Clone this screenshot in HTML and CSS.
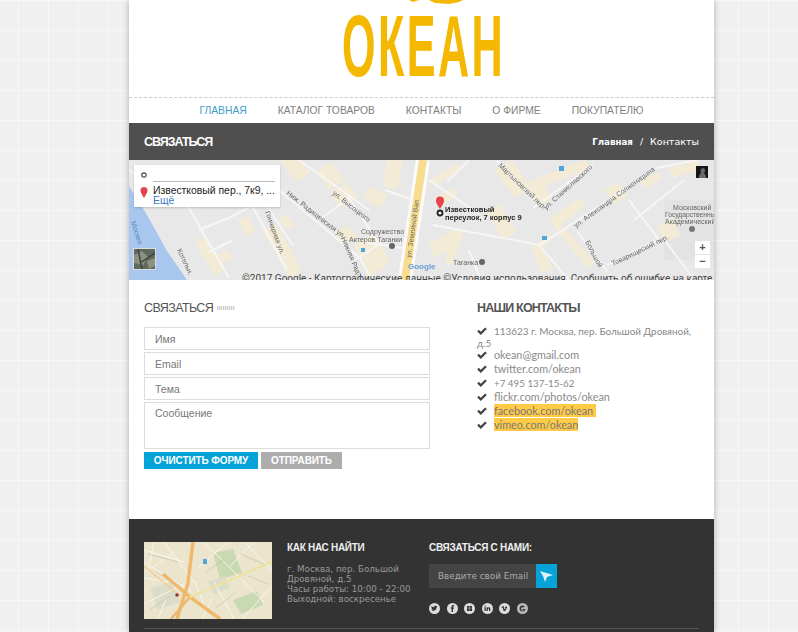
FILE: index.html
```html
<!DOCTYPE html>
<html lang="ru">
<head>
  <meta charset="UTF-8">
  <title>Океан - Связаться</title>
  <link rel="stylesheet" href="styles.css">
</head>
<body>

<div class="page">

  <div class="logo">
    <svg class="logo-swoosh" width="70" height="4" viewBox="0 0 70 4">
      <path d="M0 0h16l4 2 6-2h10l6 3 14 1 10-2 4-2z" fill="#f4b800"/>
    </svg>
    <span class="logo-text">ОКЕАН</span>
  </div>

  <ul class="nav">
    <li class="active">ГЛАВНАЯ</li>
    <li>КАТАЛОГ ТОВАРОВ</li>
    <li>КОНТАКТЫ</li>
    <li>О ФИРМЕ</li>
    <li>ПОКУПАТЕЛЮ</li>
  </ul>

  <div class="title-bar">
    <h1>СВЯЗАТЬСЯ</h1>
    <div class="crumbs"><b>Главная</b> <span class="sep">/</span> Контакты</div>
  </div>

  <div class="map">
    <svg class="map-svg" width="585" height="120" viewBox="0 0 585 120">
      <rect width="585" height="120" fill="#e8e8e8"/>
      <rect x="535" y="40" width="50" height="60" fill="#e3e3e3"/>
      <!-- blocks -->
      <g fill="#f3ebd6">
        <path d="M150 0l22 0 10 12-14 10zM186 12l16-10 14 18-16 10zM200 32l18-8 12 14-18 10z"/>
        <path d="M66 82l10-6 20 34-10 6zM78 100l20-10 6 8-20 10z"/>
        <path d="M133 70l14-6 26 46-12 8zM150 58l8-4 8 12-8 4z"/>
        <path d="M110 60l10-4 6 16-10 4z"/>
        <path d="M225 85l22-12 14 30-20 14zM205 72l14-6 10 12-14 6z"/>
        <path d="M258 0l16 0-6 30-14-4zM240 26l18 8-6 14-18-8z"/>
        <path d="M304 38l20-10 6 8-20 10zM300 20l26-16 6 6-26 16z"/>
        <path d="M365 10l18-10 18 28-14 10zM356 50l14-6 18 28-14 8z"/>
        <path d="M398 22l58-22 6 8-46 18 6 14-14 6zM402 88l18-14 4 4-10 10 10 20-12 6z"/>
        <path d="M420 60l30-22 6 8-24 18 34 38-8 6z"/>
        <path d="M300 84l28-16 6 6-10 30-8 0 2-14-14 8z"/>
        <path d="M540 8l30-8 0 10-26 8zM510 20l20-8 4 6-18 10z"/>
        <path d="M475 30l14-8 10 14-14 8z"/>
        <path d="M528 66l16-8 8 18-16 6z"/>
      </g>
      <!-- river -->
      <path d="M0 26L18 55 38 91 58 120H0z" fill="#a8c6ee"/>
      <!-- roads -->
      <g fill="none" stroke="#f6f6f6" stroke-width="2">
        <path d="M0 10l60 38 40 70"/>
        <path d="M151 31l80 67 12 22"/>
        <path d="M120 40l38 70"/>
        <path d="M100 58l34-18 30 46"/>
        <path d="M70 70l30-12M80 92l24-12"/>
        <path d="M190 60l30-22 30 46-24 16"/>
        <path d="M170 0l70 50"/>
        <path d="M304 65l107 20 117-77 40-8"/>
        <path d="M404 48l60-43M368 1l40 41"/>
        <path d="M448 71l30 40M478 105l56-27 30 40"/>
        <path d="M340 90l12 30M410 85l30 35"/>
        <path d="M300 20l50 34M340 0l-22 22"/>
        <path d="M500 40l30 40M555 20l-50 40"/>
        <path d="M290 42l-34-12M285 90l-50-8"/>
      </g>
      <!-- main road -->
      <path d="M294 0L276 120" stroke="#fbfbfb" stroke-width="14" fill="none"/>
      <path d="M294 0L276 120" stroke="#f8dc8f" stroke-width="8" fill="none"/>
      <!-- labels -->
      <g class="map-label">
        <text transform="translate(157 34) rotate(38)">Ниж. Радищевская ул.</text>
        <text transform="translate(203 34) rotate(38)">ул. Высоцкого</text>
        <text transform="translate(136 52) rotate(70)">Гончарная ул.</text>
        <text x="232" y="74">Содружество</text>
        <text x="220" y="82">Актеров Таганки</text>
        <text transform="translate(212 78) rotate(67)">Нижняя Рад.</text>
        <text transform="translate(282 98) rotate(-82)">ул. Земляной Вал</text>
        <text transform="translate(48 90) rotate(65)">Котельн.</text>
        <text transform="translate(2 62) rotate(72)" class="map-water">Москва</text>
        <text x="324" y="105">Таганка</text>
        <text transform="translate(369 6) rotate(44)">Мартыновский пер.</text>
        <text transform="translate(417 50) rotate(-42)">ул. Станиславского</text>
        <text transform="translate(447 68) rotate(-36)">ул. Александра Солженицына</text>
        <text transform="translate(456 82) rotate(62)">Большой</text>
        <text transform="translate(484 106) rotate(-26)">Товарищеский пер.</text>
        <text x="544" y="50">Московский</text>
        <text x="536" y="57" class="map-tight">Государственны</text>
        <text x="536" y="64">Академический</text>
      </g>
      <!-- small map marks -->
      <rect x="430" y="6" width="5" height="5" fill="#4ea6dc"/>
      <rect x="232" y="88" width="4" height="4" fill="#4ea6dc"/>
      <rect x="413" y="76" width="5" height="4" fill="#4ea6dc"/>
      <circle cx="263" cy="86" r="3" fill="#666"/>
      <circle cx="353" cy="102" r="3" fill="#666"/>
      <circle cx="563" cy="69" r="3" fill="#777"/>
      <text x="279" y="109" class="map-google">Google</text>
      <!-- marker -->
      <circle cx="311" cy="53" r="3.4" fill="#222"/>
      <circle cx="311" cy="53" r="1.6" fill="#eee"/>
      <path d="M311 49c-3-5-4-6-4-8.500a4 4 0 0 1 8 0c0 2.500-1 3.500-4 8.500z" fill="#e5444b"/>
      <text class="map-place" x="316" y="52">Известковый</text>
      <text class="map-place" x="316" y="60">переулок, 7 корпус 9</text>
    </svg>

    <div class="map-card">
      <svg class="card-icons" width="10" height="28" viewBox="0 0 10 28">
        <circle cx="5" cy="5" r="2.2" fill="#fff" stroke="#444" stroke-width="1.2"/>
        <path d="M5 28c-2.600-4.600-3.500-5.600-3.500-7.500a3.500 3.500 0 0 1 7 0c0 1.900-.9 2.900-3.500 7.500z" fill="#e5444b"/>
      </svg>
      <div class="card-body">
        <div class="card-line"></div>
        <div class="card-addr">Известковый пер., 7к9, ...</div>
        <div class="card-more">Ещё</div>
      </div>
    </div>

    <svg class="map-sat" width="21" height="20" viewBox="0 0 21 20">
      <rect width="21" height="20" fill="#5f6a5c"/>
      <path d="M0 6l8-4 6 6-5 8-9-2zM13 12l8-3v8l-6 3z" fill="#8b9181"/>
      <path d="M4 0l4 20M21 4L6 14" stroke="#3d463d" stroke-width="1.500"/>
    </svg>
    <svg class="map-person" width="12" height="12" viewBox="0 0 12 12">
      <rect width="12" height="12" fill="#151515"/>
      <path d="M3 12c0-3 1-4 2-5-1-2 0-5 2-5s3 3 1 5c1 1 2 2 2 5z" fill="#6a6a6a"/>
    </svg>
    <div class="zoom-ctl">
      <span>+</span>
      <span class="zoom-minus">−</span>
    </div>
    <div class="map-attr">©2017 Google - Картографические данные ©Условия использования&nbsp; Сообщить об ошибке на карте</div>
  </div>

  <div class="contact">
    <div class="contact-form">
      <h2>СВЯЗАТЬСЯ <span class="head-dots"></span></h2>
      <input class="field" type="text" placeholder="Имя">
      <input class="field" type="text" placeholder="Email">
      <input class="field" type="text" placeholder="Тема">
      <textarea class="field field-msg" placeholder="Сообщение"></textarea>
      <div class="form-btns">
        <button class="btn btn-blue" type="reset">ОЧИСТИТЬ ФОРМУ</button>
        <button class="btn btn-grey" type="submit">ОТПРАВИТЬ</button>
      </div>
    </div>

    <div class="contact-info">
      <h2>НАШИ КОНТАКТЫ</h2>
      <ul class="contact-list">
        <li class="long"><svg class="check" viewBox="0 0 12 10"><path d="M0 5.500l2-2 2.500 2.500L10 .5l2 2-7.500 7.500z"/></svg>113623 г. Москва, пер. Большой Дровяной, д.5</li>
        <li><svg class="check" viewBox="0 0 12 10"><path d="M0 5.500l2-2 2.500 2.500L10 .5l2 2-7.500 7.500z"/></svg>okean@gmail.com</li>
        <li><svg class="check" viewBox="0 0 12 10"><path d="M0 5.500l2-2 2.500 2.500L10 .5l2 2-7.500 7.500z"/></svg>twitter.com/okean</li>
        <li class="phone"><svg class="check" viewBox="0 0 12 10"><path d="M0 5.500l2-2 2.500 2.500L10 .5l2 2-7.500 7.500z"/></svg>+7 495 137-15-62</li>
        <li><svg class="check" viewBox="0 0 12 10"><path d="M0 5.500l2-2 2.500 2.500L10 .5l2 2-7.500 7.500z"/></svg>flickr.com/photos/okean</li>
        <li><svg class="check" viewBox="0 0 12 10"><path d="M0 5.500l2-2 2.500 2.500L10 .5l2 2-7.500 7.500z"/></svg><span class="hl">facebook.com/okean&nbsp;</span></li>
        <li><svg class="check" viewBox="0 0 12 10"><path d="M0 5.500l2-2 2.500 2.500L10 .5l2 2-7.500 7.500z"/></svg><span class="hl">vimeo.com/okean</span></li>
      </ul>
    </div>
  </div>

  <div class="footer">
    <div class="footer-cols">
      <svg class="footer-map" width="128" height="77" viewBox="0 0 128 77">
        <rect width="128" height="77" fill="#ebe5ce"/>
        <path d="M69 11l20-4 9 24-22 6zM89 58l24-9 6 14-22 9z" fill="#c9d9b2"/>
        <path d="M6 46l22-6 8 20-22 8zM64 40l16-6 6 12-16 6z" fill="#dcdccb"/>
        <g fill="none" stroke="#f8f6ec" stroke-width="1">
          <path d="M0 20l48 30M0 62l40-20M60 0l60 60M60 62l-10-24M20 0l30 40M90 77L70 40M0 8l40 12"/>
          <path d="M10 0l-6 30M30 10l-22 16M84 0l-30 26M100 0l28 28M128 44l-30 33M110 0l-24 24M0 36l24 4M58 77l10-20M14 77l8-20"/>
        </g>
        <g fill="none" stroke="#b9b5a3" stroke-width=".5">
          <path d="M4 12l30 8M12 30l24 14M62 30l20-14M96 12l24 10M72 66l20-16M104 34l20 8M6 68l20-14"/>
        </g>
        <g fill="none" stroke="#efb96c" stroke-width="3.500">
          <path d="M49 0l-5 41-11 36"/>
          <path d="M19 32l27 23 30 22"/>
        </g>
        <path d="M128 20L46 55" fill="none" stroke="#efe39f" stroke-width="2"/>
        <path d="M45 56l-18 21" fill="none" stroke="#efb96c" stroke-width="2.500"/>
        <path d="M0 24l36 30" fill="none" stroke="#efcf95" stroke-width="1.500"/>
        <path d="M59 17h4v5h-4z" fill="#4ea6dc"/>
        <circle cx="33" cy="53" r="1.800" fill="#8a3a30"/>
      </svg>

      <div class="footer-find">
        <h3>КАК НАС НАЙТИ</h3>
        <p>г. Москва, пер. Большой<br>Дровяной, д.5<br>Часы работы: 10:00 - 22:00<br>Выходной: воскресенье</p>
      </div>

      <div class="footer-sub">
        <h3>СВЯЗАТЬСЯ С НАМИ:</h3>
        <div class="sub-form">
          <input class="sub-input" type="text" placeholder="Введите свой Email">
          <button class="sub-btn" type="button">
            <svg width="13" height="11" viewBox="0 0 13 11"><path d="M0 0l13 4-6 2-2 5-2-6z" fill="#dff3fb"/></svg>
          </button>
        </div>
        <div class="socials">
          <span class="social"><svg viewBox="0 0 11 11"><path d="M8.500 3.300c-.3.100-.5.200-.8.200.3-.2.500-.4.600-.7-.3.100-.6.300-.9.300a1.300 1.300 0 0 0-2.200 1.200 3.700 3.700 0 0 1-2.700-1.300c-.3.600-.2 1.300.4 1.700-.2 0-.4-.1-.6-.2 0 .6.500 1.200 1 1.300h-.6c.2.500.6.900 1.200.9a2.700 2.700 0 0 1-1.900.5c2.500 1.500 5.800 0 5.700-3.200.3-.2.600-.4.800-.7z"/></svg></span>
          <span class="social"><svg viewBox="0 0 11 11"><path d="M4.600 9V5.800H3.700V4.600h.9v-.9C4.600 2.700 5.200 2 6.200 2h.9v1.200h-.6c-.4 0-.5.200-.5.500v.9h1.100l-.2 1.200h-.9V9z"/></svg></span>
          <span class="social"><svg viewBox="0 0 11 11"><path d="M3 3h2.300v5H3zM5.700 3H8v5H5.700z"/><circle cx="4.200" cy="5" r=".6" fill="#ddd"/><circle cx="6.800" cy="5" r=".6" fill="#ddd"/></svg></span>
          <span class="social"><svg viewBox="0 0 11 11"><path d="M2.500 4.300h1.300V8H2.500zM3.150 2.400a.7.700 0 1 1 0 1.400.7.700 0 0 1 0-1.400zM4.600 4.300h1.200v.5c.5-.8 2.500-1 2.500 1V8H7V6c0-.8-1.100-.8-1.100 0v2H4.600z"/></svg></span>
          <span class="social"><svg viewBox="0 0 11 11"><path d="M2.300 4.300c1.500-1.300 2-1.700 2.500-.6l.6 2.300c.3.800.6.300 1.200-.7.300-.7-.4-.8-.9-.4.500-1.700 2.900-2 2.300-.2C7.200 7 5.400 8.700 4.800 8 4 7 4.100 5 3.400 4.300l-.8.400z"/></svg></span>
          <span class="social social-last"><svg viewBox="0 0 11 11"><path d="M7.800 3.600A3 3 0 1 0 8.500 6H5.600v1h1.700a1.800 1.800 0 1 1-.3-2.600z"/></svg></span>
        </div>
      </div>
    </div>
    <div class="footer-line"></div>
  </div>

</div>

</body>
</html>
```

FILE: styles.css
```css
html, body {
  margin: 0;
  height: 632px;
  overflow: hidden;
}

body {
  font-family: 'Liberation Sans', Arial, sans-serif;
  background-color: #f0f0f0;
  background-image:
    linear-gradient(90deg, #f7f7f7 1px, transparent 1px),
    linear-gradient(#f7f7f7 1px, transparent 1px);
  background-size: 30px 30px;
  background-position: 18px 0;
}

.page {
  width: 585px;
  height: 632px;
  margin-left: 129px;
  background: white;
  box-shadow: 0 0 6px rgba(0,0,0,0.28);
  overflow: hidden;
}

/* logo */
.logo {
  height: 97px;
  position: relative;
  overflow: hidden;
}

.logo-swoosh {
  position: absolute;
  left: 264px;
  top: 0;
}

.logo-text {
  position: absolute;
  left: 213px;
  top: 4px;
  font-size: 88px;
  line-height: 84px;
  font-weight: bold;
  letter-spacing: 5px;
  color: #f4b800;
  white-space: nowrap;
  transform: scaleX(0.49);
  transform-origin: left top;
}

/* nav */
.nav {
  list-style: none;
  margin: 0;
  padding: 0 0 1px;
  height: 26px;
  border-top: 1px dashed #ccc;
  display: flex;
  justify-content: center;
  align-items: center;
  gap: 31px;
  box-sizing: border-box;
  font-size: 10.3px;
  color: #808080;
}

.nav .active {
  color: #3e9cc9;
}

/* title bar */
.title-bar {
  height: 37px;
  background: #4f4f4f;
  color: white;
  display: flex;
  justify-content: space-between;
  align-items: center;
  padding: 0 15px;
}

.title-bar h1 {
  margin: 0;
  font-size: 12.5px;
  font-weight: bold;
  letter-spacing: -1px;
}

.crumbs {
  font-family: 'DejaVu Sans', sans-serif;
  font-size: 9.5px;
}

.crumbs b {
  font-size: 8.7px;
}

.crumbs .sep {
  margin: 0 4px;
}

/* map */
.map {
  position: relative;
  height: 120px;
  overflow: hidden;
}

.map-svg {
  display: block;
  filter: blur(0.3px);
}

.map-label {
  font-family: 'Liberation Sans', sans-serif;
  font-size: 7px;
  fill: #666;
}

.map-tight {
  font-size: 6.7px;
}

.map-water {
  fill: #5a86c0;
}

.map-google {
  font-family: 'Liberation Sans', sans-serif;
  font-size: 8px;
  font-weight: bold;
  fill: #6a9bd8;
}

.map-place {
  font-family: 'Liberation Sans', sans-serif;
  font-size: 7.5px;
  font-weight: bold;
  fill: #222;
}

.map-card {
  position: absolute;
  left: 5px;
  top: 5px;
  width: 146px;
  height: 42px;
  background: white;
  box-shadow: 0 1px 2px rgba(0,0,0,0.2);
  display: flex;
  box-sizing: border-box;
  padding: 5px 6px 0 5px;
}

.card-icons {
  flex: none;
}

.card-body {
  margin-left: 4px;
  flex: 1;
}

.card-line {
  height: 1px;
  background: #bbb;
  margin-top: 11px;
}

.card-addr {
  font-size: 10.4px;
  line-height: 10px;
  margin-top: 4px;
  color: #222;
  white-space: nowrap;
}

.card-more {
  font-size: 10.4px;
  line-height: 10px;
  color: #3b78c4;
}

.map-sat {
  position: absolute;
  left: 5px;
  top: 89px;
  outline: 1px solid #ddd;
}

.map-person {
  position: absolute;
  left: 567px;
  top: 6px;
}

.zoom-ctl {
  position: absolute;
  left: 566px;
  top: 81px;
  width: 15px;
  height: 27px;
  background: white;
  color: #555;
  font-size: 11px;
  font-weight: bold;
  line-height: 13px;
  text-align: center;
}

.zoom-ctl span {
  display: block;
}

.zoom-minus {
  border-top: 1px solid #e4e4e4;
}

.map-attr {
  position: absolute;
  left: 113px;
  top: 113px;
  font-family: 'Roboto', sans-serif;
  font-size: 10px;
  line-height: 12px;
  color: #444;
  white-space: nowrap;
}

/* contact */
.contact {
  display: flex;
  padding: 20px 15px 50px;
  gap: 47px;
  height: 239px;
  box-sizing: border-box;
}

.contact h2 {
  margin: 0;
  height: 16px;
  font-size: 12.5px;
  line-height: 16px;
  letter-spacing: -0.8px;
  color: #555;
}

.contact-form {
  width: 286px;
  display: flex;
  flex-direction: column;
  gap: 2px;
}

.contact-form h2 {
  font-weight: normal;
  letter-spacing: -0.6px;
  margin-bottom: 9px;
  display: flex;
  align-items: center;
  gap: 4px;
}

.head-dots {
  width: 18px;
  height: 4px;
  background: repeating-linear-gradient(90deg, #ccc 0 1px, #eee 1px 2px);
}

.field {
  display: block;
  width: 100%;
  height: 23px;
  box-sizing: border-box;
  border: 1px solid #ddd;
  border-radius: 0;
  padding: 0 10px;
  margin: 0;
  font-family: 'Liberation Sans', sans-serif;
  font-size: 10.5px;
  background: white;
  outline: none;
}

.field::placeholder {
  color: #777;
  opacity: 1;
}

.field-msg {
  height: 47px;
  padding-top: 4px;
  resize: none;
}

.form-btns {
  display: flex;
  gap: 3px;
  margin-top: 1px;
}

.btn {
  height: 17px;
  padding: 0;
  border: none;
  color: white;
  font-family: 'Liberation Sans', sans-serif;
  font-size: 10px;
  font-weight: bold;
  letter-spacing: -0.1px;
}

.btn-blue {
  width: 114px;
  background: #06a3d9;
}

.btn-grey {
  width: 81px;
  background: #adadad;
}

.contact-info {
  flex: 1;
  min-width: 0;
}

.contact-list {
  list-style: none;
  margin: 10px 0 0;
  padding: 0;
  font-family: 'Lato', 'DejaVu Sans', sans-serif;
  font-size: 10.8px;
  line-height: 12px;
  color: #888;
}

.contact-list li {
  margin-bottom: 2px;
}

.contact-list .long {
  font-size: 9.9px;
  line-height: 11.5px;
  margin-bottom: 0;
}

.contact-list .phone {
  font-size: 9.8px;
}

.check {
  width: 10px;
  height: 8px;
  margin-right: 7px;
  fill: #444;
}

.hl {
  background: #ffcb47;
  color: #777;
}

/* footer */
.footer {
  height: 113px;
  background: #333;
  padding: 23px 15px 0;
  box-sizing: border-box;
}

.footer-cols {
  display: flex;
  height: 87px;
}

.footer-map {
  flex: none;
  display: block;
}

.footer h3 {
  margin: 0;
  font-size: 10px;
  line-height: 12px;
  letter-spacing: -0.3px;
  color: #eee;
}

.footer-find {
  width: 142px;
  margin-left: 15px;
}

.footer-find p {
  margin: 10px 0 0;
  font-family: 'DejaVu Sans', sans-serif;
  font-size: 8.7px;
  line-height: 10px;
  color: #999;
}

.sub-form {
  display: flex;
  margin-top: 10px;
  height: 24px;
}

.sub-input {
  width: 107px;
  box-sizing: border-box;
  border: none;
  padding: 0 0 0 9px;
  background: #444;
  font-family: 'DejaVu Sans', sans-serif;
  font-size: 8.8px;
  outline: none;
}

.sub-input::placeholder {
  color: #aaa;
  opacity: 1;
}

.sub-btn {
  width: 21px;
  padding: 0;
  border: none;
  background: #06a3d9;
  display: flex;
  align-items: center;
  justify-content: center;
}

.socials {
  display: flex;
  gap: 6.5px;
  margin-top: 15px;
}

.social {
  width: 11px;
  height: 11px;
  border-radius: 50%;
  background: #ddd;
  display: block;
}

.social svg {
  display: block;
  fill: #333;
}

.social-last {
  background: #bbb;
}

.footer-line {
  height: 1px;
  background: #555;
  margin-top: -1px;
}
```
